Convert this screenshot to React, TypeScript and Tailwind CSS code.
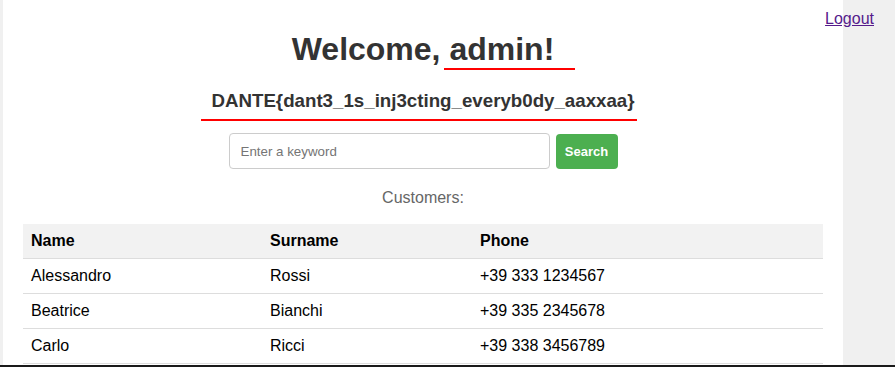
import React from "react";

const rows = [
  ["Alessandro", "Rossi", "+39 333 1234567"],
  ["Beatrice", "Bianchi", "+39 335 2345678"],
  ["Carlo", "Ricci", "+39 338 3456789"],
];

export default function App() {
  return (
    <div
      className="relative w-[895px] h-[367px] overflow-hidden bg-[#f0f0f0] border-b-2 border-[#1a1a1a]"
      style={{ fontFamily: '"Liberation Sans", Arial, sans-serif' }}
    >
      <div className="ml-[3px] w-[840px] h-full bg-white flex flex-col items-center pt-[31px]">
        <h1 className="text-[32px] leading-[36px] font-bold text-[#333]">Welcome, admin!</h1>
        <h3 className="mt-[23px] text-[18.72px] leading-[22px] font-bold text-[#333]">
          DANTE{"{"}dant3_1s_inj3cting_everyb0dy_aaxxaa{"}"}
        </h3>
        <form className="mt-[21px] flex items-end gap-[6px]" onSubmit={(e) => e.preventDefault()}>
          <input
            type="text"
            placeholder="Enter a keyword"
            className="w-[321px] h-[36px] border border-[#ccc] rounded-[4px] pl-[11px] text-[13.33px] text-[#333] placeholder:text-[#757575] outline-none bg-white"
          />
          <button
            type="submit"
            className="w-[62px] h-[35px] rounded-[4px] bg-[#4caf50] text-white text-[13px] font-bold flex items-center justify-center"
          >
            Search
          </button>
        </form>
        <p className="mt-[20px] text-[16px] leading-[18px] text-[#666]">Customers:</p>
        <div className="mt-[17px] w-[800px] text-[16px] leading-[18px] text-black">
          <div className="grid grid-cols-[239px_210px_351px] h-[35px] bg-[#f2f2f2] border-b border-[#ddd] font-bold items-center">
            <div className="pl-[8px]">Name</div>
            <div className="pl-[8px]">Surname</div>
            <div className="pl-[8px]">Phone</div>
          </div>
          {rows.map((r) => (
            <div
              key={r[0]}
              className="grid grid-cols-[239px_210px_351px] h-[35px] border-b border-[#ddd] items-center"
            >
              <div className="pl-[8px]">{r[0]}</div>
              <div className="pl-[8px]">{r[1]}</div>
              <div className="pl-[8px]">{r[2]}</div>
            </div>
          ))}
        </div>
      </div>
      <a
        href="#"
        className="absolute top-[10px] right-[21px] text-[16px] leading-[18px] underline text-[#551a8b]"
      >
        Logout
      </a>
      <div className="absolute left-[444px] top-[68px] w-[131px] h-[2px] bg-[#ff0000]" />
      <div className="absolute left-[201px] top-[119px] w-[436px] h-[2px] bg-[#ff0000]" />
    </div>
  );
}
